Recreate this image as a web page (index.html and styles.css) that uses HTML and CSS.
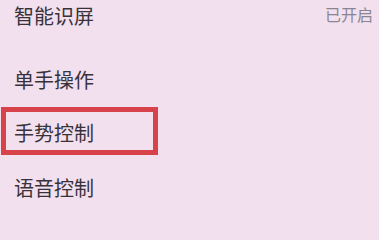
FILE: index.html
```html
<!DOCTYPE html>
<html lang="zh-CN">
<head>
<meta charset="utf-8">
<link rel="stylesheet" href="styles.css">
</head>
<body>
<div class="list">
  <div class="item first">
    <span class="label">智能识屏</span>
    <span class="status">已开启</span>
  </div>
  <div class="item second">
    <span class="label">单手操作</span>
  </div>
  <div class="item boxed">
    <span class="label">手势控制</span>
  </div>
  <div class="item fourth">
    <span class="label">语音控制</span>
  </div>
</div>
</body>
</html>
```

FILE: styles.css
```css
html, body {
  margin: 0;
  padding: 0;
  background: #f2e0ef;
}
body {
  width: 379px;
  height: 231px;
  overflow: hidden;
  font-family: "Noto Sans CJK SC", "Noto Sans", sans-serif;
}
.list {
  display: flex;
  flex-direction: column;
}
.item {
  display: flex;
  justify-content: space-between;
  align-items: flex-start;
  padding: 0 6px 0 14px;
  height: 24px;
}
.label {
  font-size: 20px;
  line-height: 24px;
  color: #38333b;
}
.status {
  font-size: 16px;
  line-height: 20px;
  color: #8b8590;
}
.first {
  margin-top: 4px;
}
.second {
  margin-top: 40px;
}
.boxed {
  box-sizing: border-box;
  margin-top: 15px;
  margin-left: 1px;
  width: 157px;
  height: 48px;
  border: 5px solid #d8424b;
  padding: 9px 0 0 8px;
}
.fourth {
  margin-top: 21px;
}
```
